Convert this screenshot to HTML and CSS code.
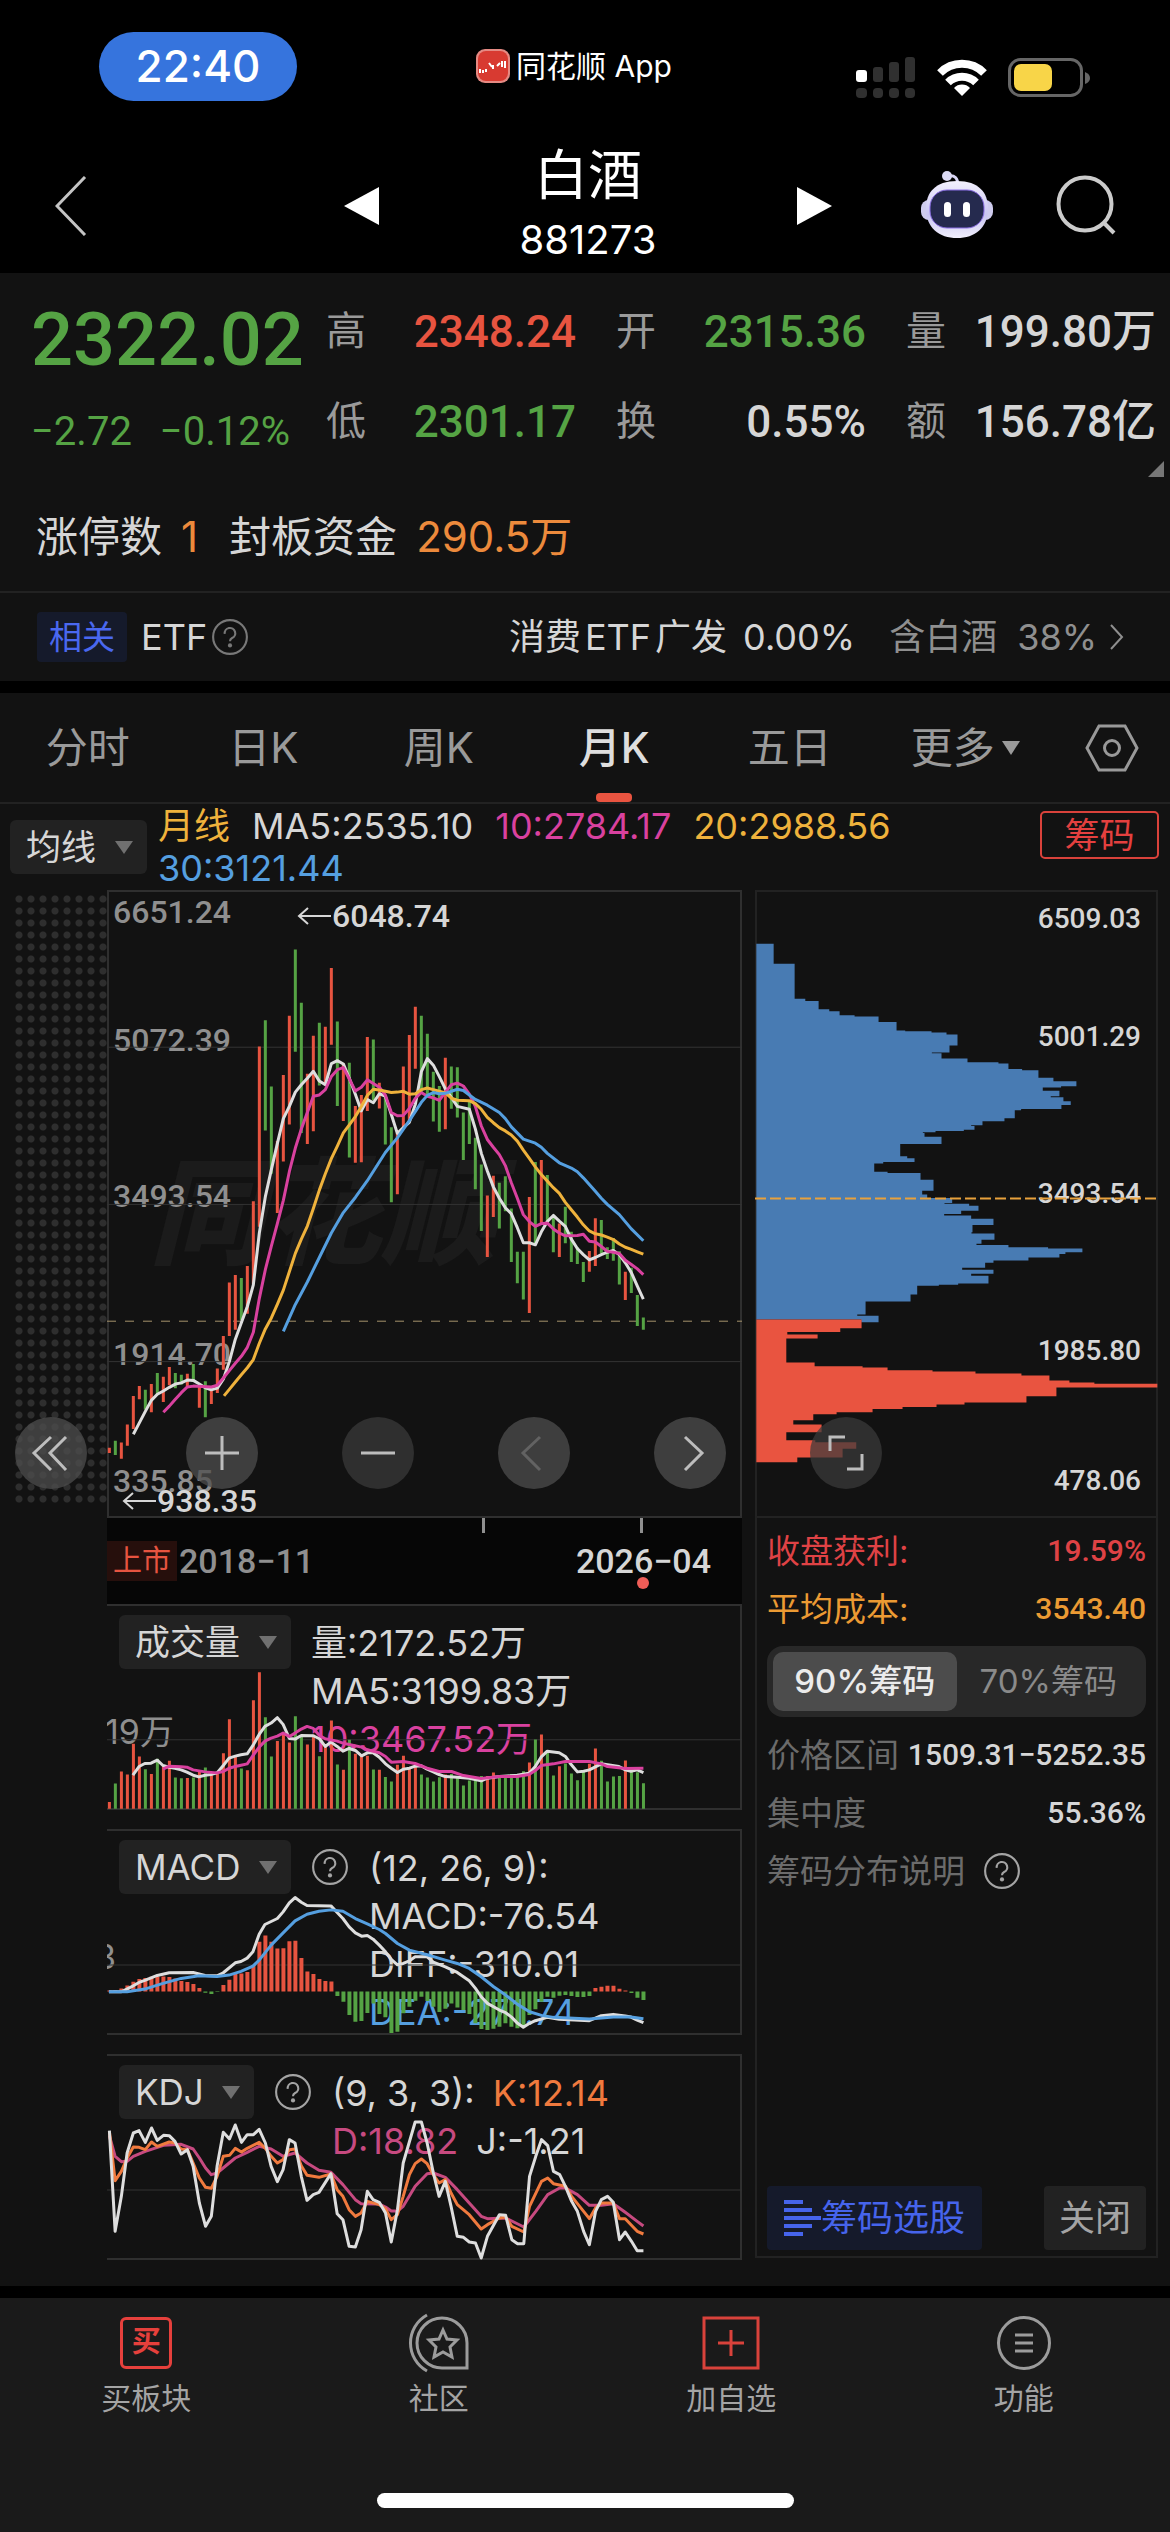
FILE: index.html
```html
<!DOCTYPE html>
<html lang="zh-CN">
<head>
<meta charset="utf-8">
<meta name="viewport" content="width=device-width">
<title>白酒 881273</title>
<link rel="stylesheet" href="styles.css">
</head>
<body>
<header class="top">
  <div class="status">
    <span class="clock">22:40</span>
    <span class="source">
      <svg width="34" height="34" viewBox="0 0 34 34" aria-hidden="true"><rect width="34" height="34" rx="9" fill="#e58a83"/><rect x="2" y="2" width="30" height="30" rx="8" fill="#d83a31"/><path d="M4 20v4M7 21v3M10 20v3M13 14l3 4M17 16v4M21 17l3-3M26 12v6M29 12v7" stroke="#fff" stroke-width="2" fill="none"/></svg>
      同花顺 App
    </span>
    <span class="signals">
      <svg width="60" height="42" viewBox="0 0 60 42" aria-hidden="true"><g fill="#303030"><rect x="17" y="10" width="10" height="15" rx="3"/><rect x="33" y="5" width="10" height="20" rx="3"/><rect x="49" y="0" width="10" height="25" rx="3"/><rect x="0" y="31" width="11" height="10" rx="4"/><rect x="17" y="31" width="10" height="10" rx="4"/><rect x="33" y="31" width="10" height="10" rx="4"/><rect x="49" y="31" width="10" height="10" rx="4"/></g><rect x="0" y="13" width="11" height="12" rx="3" fill="#fff"/></svg>
      <svg width="50" height="38" viewBox="0 0 50 38" aria-hidden="true"><g fill="none" stroke="#fff" stroke-width="8"><path d="M3 14a31 31 0 0 1 44 0"/><path d="M11 23.500a20 20 0 0 1 28 0"/></g><path d="M25 37l-8-8a11 11 0 0 1 16 0z" fill="#fff"/></svg>
      <svg width="82" height="40" viewBox="0 0 82 40" aria-hidden="true"><rect x="1.500" y="1.500" width="72" height="36" rx="11" fill="none" stroke="#666" stroke-width="3"/><rect x="6" y="6" width="38" height="27" rx="7" fill="#f8d548"/><path d="M77 14q5 2 5 6t-5 6z" fill="#666"/></svg>
    </span>
  </div>
  <nav class="title-bar">
    <button class="plain" aria-label="返回"><svg width="32" height="60" viewBox="0 0 32 60"><path d="M30 1L2 30l28 29" fill="none" stroke="#c4c4c4" stroke-width="3"/></svg></button>
    <button class="plain" aria-label="上一个"><svg width="35" height="38" viewBox="0 0 35 38"><path d="M35 0v38L0 19z" fill="#fff"/></svg></button>
    <div class="title"><h1>白酒</h1><p>881273</p></div>
    <button class="plain" aria-label="下一个"><svg width="35" height="38" viewBox="0 0 35 38"><path d="M0 0v38l35-19z" fill="#fff"/></svg></button>
    <button class="plain" aria-label="智能助手">
      <svg width="72" height="68" viewBox="0 0 72 68"><defs><linearGradient id="shell" x1="0" y1="0" x2="0" y2="1"><stop offset="0" stop-color="#f2f0fd"/><stop offset=".6" stop-color="#c9c5f2"/><stop offset="1" stop-color="#f1effc"/></linearGradient></defs><path d="M27 5q10-2 10 10" fill="none" stroke="#d9d6f4" stroke-width="3"/><circle cx="26" cy="5" r="5" fill="#dcdaf4"/><rect x="0" y="29" width="72" height="20" rx="8" fill="#cfccee"/><path d="M36 10c22 0 31 12 31 27 0 20-13 30-31 30S5 57 5 37c0-15 9-27 31-27z" fill="url(#shell)"/><rect x="9" y="19" width="54" height="38" rx="17" fill="#252a4e" stroke="#8c6fe6" stroke-width="1"/><rect x="23" y="31" width="7" height="15" rx="3.500" fill="#fff"/><rect x="42" y="31" width="7" height="15" rx="3.500" fill="#fff"/></svg>
    </button>
    <button class="plain" aria-label="搜索"><svg width="62" height="60" viewBox="0 0 62 60"><circle cx="29" cy="29" r="26.500" fill="none" stroke="#cbcbcb" stroke-width="4"/><path d="M47 47l11 11" stroke="#cbcbcb" stroke-width="4"/></svg></button>
  </nav>
</header>

<main>
  <section class="panel">
    <div class="quote">
      <div class="price down">
        <strong>2322.02</strong>
        <p><span>−2.72</span><span>−0.12%</span></p>
      </div>
      <dl class="stats">
        <div><dt>高</dt><dd class="up">2348.24</dd></div>
        <div><dt>开</dt><dd class="down">2315.36</dd></div>
        <div><dt>量</dt><dd>199.80万</dd></div>
        <div><dt>低</dt><dd class="down">2301.17</dd></div>
        <div><dt>换</dt><dd>0.55%</dd></div>
        <div><dt>额</dt><dd>156.78亿</dd></div>
      </dl>
      <i class="corner"></i>
    </div>
    <p class="limits">涨停数<b>1</b><span>封板资金</span><b>290.5万</b></p>
    <a class="etf" href="#etf">
      <span class="tag">相关</span><span>ETF</span>
      <svg class="help dim" viewBox="0 0 36 36"><circle cx="18" cy="18" r="16"/><path d="M13 15a5 5 0 1 1 7 4q-2 1-2 3"/><circle class="dot" cx="18" cy="26" r="2"/></svg>
      <span class="etf-name">消费<span>ETF</span>广发</span><span>0.00%</span><span class="muted etf-holding">含白酒</span><span class="muted etf-share">38%</span>
      <svg width="15" height="26" viewBox="0 0 15 26"><path d="M2 1l11 12L2 25" fill="none" stroke="#8f8f8f" stroke-width="2"/></svg>
    </a>
  </section>

  <section class="panel chart-panel">
    <div class="tabs">
      <button>分时</button><button>日K</button><button>周K</button><button class="active">月K</button><button>五日</button><button>更多<i class="caret"></i></button>
      <button aria-label="设置" class="gear"><svg width="54" height="48" viewBox="0 0 54 48"><path d="M14 2h26l12 22-12 22H14L2 24z" fill="none" stroke="#999" stroke-width="3"/><circle cx="27" cy="24" r="7.500" fill="none" stroke="#999" stroke-width="3"/></svg></button>
    </div>
    <div class="averages">
      <label class="pick"><select aria-label="主图指标"><option>均线</option></select></label>
      <p><span class="yellow">月线</span><span>MA5:2535.10</span><span class="pink">10:2784.17</span><span class="yellow">20:2988.56</span><span class="blue">30:3121.44</span></p>
      <button class="chips-toggle">筹码</button>
    </div>

    <div class="board">
      <div class="dots"></div>
      <div class="charts">
        <div class="frame price-chart">
          <span class="watermark">同花顺</span>
          <span class="y-label y1">6651.24</span><span class="y-label y2">5072.39</span><span class="y-label y3">3493.54</span><span class="y-label y4">1914.70</span><span class="y-label y5">335.85</span>
          <svg class="plot" viewBox="21 25 1905 1538" preserveAspectRatio="none" aria-label="月K线">
            <path class="grid" d="M21 410H1926M21 795H1926M21 1180H1926"/>
            <path class="last" d="M21 1081H1926"/>
            <path class="candle red" id="candle-up"/><path class="candle green" id="candle-down"/>
            <polyline class="line white" points="100,1358 118,1330 136,1302 154,1275 172,1260 190,1252 208,1243 226,1235 244,1232 262,1225 280,1226 298,1235 316,1244 334,1249 352,1245 370,1223 388,1180 406,1125 424,1085 442,1045 460,992 478,865 496,776 514,710 532,646 550,585 568,555 586,520 604,502 622,486 640,469 658,493 676,502 694,450 712,443 730,451 748,486 766,525 784,566 802,538 820,546 838,524 856,530 874,575 892,621 910,607 928,594 946,550 964,470 982,438 1000,454 1018,482 1036,512 1054,533 1072,555 1108,562 1126,610 1144,670 1162,713 1180,752 1198,780 1216,803 1234,818 1252,852 1270,889 1288,889 1306,894 1324,862 1342,837 1360,822 1378,836 1396,849 1414,880 1432,903 1450,918 1468,931 1486,925 1504,918 1522,912 1540,908 1558,918 1576,938 1594,962 1612,995 1630,1027"/>
            <polyline class="line pink" points="190,1304 208,1289 226,1272 244,1256 262,1242 280,1240 334,1242 352,1238 370,1220 388,1202 406,1184 424,1167 442,1145 460,1108 478,1025 496,955 514,897 532,842 550,785 568,715 586,657 604,610 622,570 640,530 658,527 676,514 694,482 712,465 730,460 748,488 766,517 784,508 802,490 820,499 838,508 856,527 874,570 892,578 910,577 928,560 946,535 964,521 982,530 1000,534 1018,540 1036,520 1054,502 1072,498 1090,505 1108,525 1126,555 1144,603 1162,636 1180,655 1198,673 1216,700 1234,742 1252,780 1270,820 1288,837 1306,849 1324,842 1342,841 1360,855 1378,865 1396,872 1432,871 1450,868 1468,885 1486,887 1504,898 1522,910 1540,912 1558,915 1576,932 1594,942 1612,953 1630,967"/>
            <polyline class="line yellow" points="372,1264 388,1248 406,1230 424,1212 442,1195 460,1175 478,1135 496,1100 514,1073 532,1040 550,1005 568,960 586,915 604,880 622,848 640,805 658,760 676,720 694,683 712,652 730,620 748,600 766,580 784,555 802,528 820,513 838,515 856,518 874,521 892,520 910,518 928,525 946,524 964,514 982,510 1000,514 1018,518 1036,522 1054,535 1072,540 1108,541 1126,548 1144,562 1162,582 1180,595 1198,607 1216,615 1234,625 1252,640 1270,662 1288,682 1306,703 1324,722 1342,738 1360,754 1378,768 1396,790 1414,808 1432,826 1450,845 1468,860 1486,867 1504,870 1522,875 1540,881 1558,892 1576,900 1594,905 1612,911 1630,917"/>
            <polyline class="line blue" points="550,1106 586,1040 622,985 658,925 694,865 730,815 766,778 802,737 856,668 892,632 928,590 964,545 982,528 1000,521 1018,524 1036,523 1072,513 1090,516 1126,538 1162,552 1198,570 1216,585 1234,605 1270,635 1306,645 1324,655 1342,670 1378,693 1414,706 1432,715 1450,730 1486,763 1504,780 1522,795 1558,820 1594,855 1630,884"/>
          </svg>
          <span class="extreme high"><svg width="34" height="18" viewBox="0 0 34 18"><path d="M34 9H2M11 1L2 9l9 8"/></svg>6048.74</span>
          <span class="extreme low"><svg width="34" height="18" viewBox="0 0 34 18"><path d="M34 9H2M11 1L2 9l9 8"/></svg>938.35</span>
        </div>
        <div class="axis">
          <i class="tick t1"></i><i class="tick t2"></i>
          <span class="listed">上市</span><span class="muted">2018−11</span><span class="now">2026−04</span>
        </div>
        <div class="frame sub">
          <div class="sub-head">
            <label class="pick"><select aria-label="副图指标一"><option>成交量</option></select></label>
            <p><span>量:2172.52万</span><br><span>MA5:3199.83万</span><br><span class="pink">10:3467.52万</span></p>
          </div>
          <span class="scale">19万</span>
          <svg class="plot" viewBox="224 312 1327 616" preserveAspectRatio="none" aria-label="成交量">
            <path class="grid" d="M224 718H1551"/>
            <path class="candle red" id="volume-up"/><path class="candle green" id="volume-down"/>
            <polyline class="line white" points="278,824 291,798 303,789 316,788 329,779 341,795 354,800 366,803 379,808 391,815 404,824 416,829 429,824 441,822 454,817 467,795 479,773 492,767 504,763 517,760 529,735 542,702 554,678 567,668 580,652 592,672 605,714 617,716 630,705 655,706 668,715 680,738 692,725 705,738 717,752 730,744 743,750 756,766 768,757 780,757 793,770 806,790 818,803 831,816 843,806 856,803 868,797 881,796 893,806 906,814 918,822 931,828 956,830 981,833 1006,841 1019,833 1044,828 1081,824 1106,818 1119,798 1131,770 1144,752 1169,757 1182,768 1194,792 1207,814 1220,812 1232,808 1257,790 1270,793 1294,798 1307,808 1319,812 1332,808 1345,816"/>
            <polyline class="line pink" points="341,806 354,797 379,799 391,800 404,808 429,814 454,817 467,813 479,803 492,798 504,794 517,790 529,765 542,740 554,722 567,713 580,707 592,698 605,708 617,698 630,686 642,678 655,684 668,705 680,715 705,722 717,728 730,732 756,740 768,748 793,757 806,768 818,785 843,783 868,789 893,803 918,813 944,813 969,825 1006,834 1044,828 1081,828 1106,822 1119,810 1131,795 1157,790 1182,783 1232,783 1257,790 1270,798 1307,804 1345,803"/>
          </svg>
        </div>
        <div class="frame sub">
          <div class="sub-head">
            <label class="pick"><select aria-label="副图指标二"><option>MACD</option></select></label>
            <svg class="help" viewBox="0 0 36 36"><circle cx="18" cy="18" r="16"/><path d="M13 15a5 5 0 1 1 7 4q-2 1-2 3"/><circle class="dot" cx="18" cy="26" r="2"/></svg>
            <p><span>(12, 26, 9):</span><br><span>MACD:-76.54</span><br><span>DIFF:-310.01</span><br><span class="blue">DEA:-271.74</span></p>
          </div>
          <span class="scale clipped">3</span>
          <svg class="plot" viewBox="224 56 1327 619" preserveAspectRatio="none" aria-label="MACD">
            <path class="grid" d="M224 465H1551"/>
            <path class="candle wide red" id="macd-up"/><path class="candle wide green" id="macd-down"/>
            <polyline class="line white" points="228,545 254,545 278,528 291,517 303,511 329,496 354,488 404,487 429,496 454,497 467,488 492,458 504,454 517,444 529,425 542,372 554,343 580,325 592,305 605,278 617,262 630,276 642,286 692,287 705,307 717,325 730,350 743,368 756,378 768,376 780,387 793,405 806,425 818,448 831,464 843,460 856,452 868,440 893,440 906,456 931,470 956,487 981,512 994,535 1006,560 1019,580 1044,600 1057,608 1070,622 1082,640 1094,652 1107,640 1119,632 1144,622 1169,628 1232,632 1257,617 1282,613 1307,618 1319,621 1332,630 1345,638"/>
            <polyline class="line blue" points="228,545 266,545 303,537 341,520 379,505 416,497 454,499 479,495 504,484 529,468 542,450 567,405 592,368 617,332 642,312 667,303 692,299 717,303 743,325 768,341 793,358 806,370 831,400 856,420 893,434 931,450 956,460 981,475 1006,500 1032,530 1057,555 1082,583 1107,605 1132,616 1157,622 1232,627 1282,621 1319,621 1345,626"/>
          </svg>
        </div>
        <div class="frame sub">
          <div class="sub-head">
            <label class="pick"><select aria-label="副图指标三"><option>KDJ</option></select></label>
            <svg class="help" viewBox="0 0 36 36"><circle cx="18" cy="18" r="16"/><path d="M13 15a5 5 0 1 1 7 4q-2 1-2 3"/><circle class="dot" cx="18" cy="26" r="2"/></svg>
            <p><span>(9, 3, 3):</span><span class="orange">K:12.14</span><br><span class="rose">D:18.82</span><span>J:-1.21</span></p>
          </div>
          <svg class="plot" viewBox="224 733 1327 618" preserveAspectRatio="none" aria-label="KDJ">
            <path class="grid" d="M224 1141H1551"/>
            <polyline class="line rose" points="229,978 241,1040 254,1056 266,1055 279,1040 304,1025 342,1007 379,1004 404,1018 417,1045 430,1075 442,1095 454,1090 492,1045 517,1028 542,1010 567,1018 592,1040 617,1030 642,1060 667,1082 692,1088 717,1125 743,1170 755,1182 793,1183 806,1192 818,1204 831,1204 843,1190 868,1130 893,1092 906,1090 931,1103 956,1140 981,1180 1006,1220 1019,1227 1057,1225 1095,1252 1120,1205 1145,1155 1170,1135 1182,1135 1207,1155 1232,1187 1257,1187 1282,1182 1307,1208 1332,1235 1345,1249"/>
            <polyline class="line orange" points="229,965 241,1113 254,1085 266,1045 279,1012 291,1013 304,1020 317,997 329,1010 354,997 366,1000 379,1018 392,1020 404,1060 417,1105 430,1133 442,1136 454,1100 467,1040 480,1037 492,1016 505,1027 517,1016 542,998 555,1016 567,1040 580,1060 592,1050 605,1020 617,1018 630,1068 642,1097 667,1103 692,1093 705,1140 717,1160 730,1200 743,1220 755,1210 768,1175 793,1185 806,1197 818,1230 831,1215 843,1160 856,1095 868,1062 881,1048 893,1062 906,1095 918,1120 931,1110 943,1150 956,1185 981,1215 1006,1258 1019,1245 1044,1225 1057,1222 1070,1250 1095,1267 1107,1190 1132,1115 1145,1105 1157,1122 1182,1130 1195,1160 1220,1205 1232,1227 1245,1195 1257,1180 1282,1180 1295,1227 1307,1227 1332,1265 1345,1273"/>
            <polyline class="line white" points="229,963 241,1265 254,1160 266,1030 279,970 291,963 304,998 317,955 329,992 342,977 354,978 366,995 379,1033 392,1020 404,1070 417,1180 430,1250 442,1220 454,1070 467,968 480,988 492,946 505,998 517,975 530,975 542,959 555,1000 567,1070 580,1116 592,1080 605,990 617,1000 630,1100 642,1172 655,1155 667,1148 692,1092 705,1212 717,1230 730,1310 743,1312 755,1260 768,1145 780,1170 793,1178 806,1210 818,1297 831,1200 843,1060 868,937 881,937 893,1000 906,1090 918,1160 931,1115 943,1190 956,1280 969,1283 981,1297 994,1300 1006,1345 1019,1280 1044,1215 1057,1217 1070,1290 1082,1302 1095,1302 1107,1100 1120,1040 1132,990 1145,1008 1157,1085 1170,1095 1182,1130 1195,1175 1207,1205 1220,1265 1232,1305 1245,1205 1257,1170 1270,1160 1282,1178 1295,1290 1307,1267 1320,1295 1332,1323 1345,1323"/>
          </svg>
        </div>
      </div>

      <aside class="chips">
        <div class="chip-chart">
          <svg class="plot" viewBox="15 25 1210 1538" preserveAspectRatio="none" aria-label="筹码分布">
            <path fill="#487bb3" d="M19 157H71V206H134V292H166V298H206V318H238V323H269V333H314V336H386V349H440V370H466V372H545V375H590V380H623V407H599V424H546V426H575V439H653V448H746V451H776V465H817V468H866V486H911V495H980V507H934V510H879V518H929V532H903V534H941V544H963V553H935V563H814V566H795V586H764V593H698V603H664V605H674V614H642V617H557V620H519V622H524V631H575V649H451V679H472V684H494V693H400V697H373V717H413V720H512V737H551V764H517V773H532V782H607V794H584V796H658V801H686V813H634V821H583V825H664V833H731V848H668V866H665V869H734V884H695V894H680V897H776V903H895V906H998V915H947V919H929V928H836V935H731V941H706V953H637V958H731V968H664V973H716V992H625V995H567V997H502V1019H482V1036H347V1068H322V1071H386V1087H334V1080H19Z"/>
            <path fill="#e95440" d="M19 1080H335V1102H271V1111H112V1117H203V1127H109V1186H194V1195H338V1198H413V1205H548V1208H677V1213H815V1218H899V1230H959V1235H1034V1238H1223V1247H920V1269H830V1284H644V1289H560V1295H458V1300H368V1308H260V1313H190V1328H130V1338H215V1357H109V1377H196V1382H319V1398H278V1419H142V1431H19Z"/>
          </svg>
          <span class="c-label c1">6509.03</span><span class="c-label c2">5001.29</span><span class="c-label c3">3493.54</span><span class="c-label c4">1985.80</span><span class="c-label c5">478.06</span>
          <svg class="plot" viewBox="15 25 1210 1538" preserveAspectRatio="none" aria-hidden="true"><path class="mean" d="M15 783H1225"/></svg>
        </div>
        <dl class="rows">
          <div class="profit"><dt>收盘获利:</dt><dd>19.59%</dd></div>
          <div class="cost"><dt>平均成本:</dt><dd>3543.40</dd></div>
        </dl>
        <div class="segment">
          <label><input type="radio" name="range" checked><span>90%筹码</span></label>
          <label><input type="radio" name="range"><span>70%筹码</span></label>
        </div>
        <dl class="rows">
          <div><dt>价格区间</dt><dd>1509.31−5252.35</dd></div>
          <div><dt>集中度</dt><dd>55.36%</dd></div>
        </dl>
        <a class="explain" href="#chips">筹码分布说明<svg class="help" viewBox="0 0 36 36"><circle cx="18" cy="18" r="16"/><path d="M13 15a5 5 0 1 1 7 4q-2 1-2 3"/><circle class="dot" cx="18" cy="26" r="2"/></svg></a>
        <div class="chip-actions">
          <button class="pick-stocks"><svg width="37" height="36" viewBox="0 0 37 36"><path d="M0 2h19M0 10h28M0 18h37M0 26h28M0 34h19" stroke="#4664ec" stroke-width="4"/></svg>筹码选股</button>
          <button class="close">关闭</button>
        </div>
      </aside>

      <div class="tools">
        <button aria-label="展开"><svg viewBox="0 0 72 72"><path d="M36 20L19 36l17 17M51 20L35 36l16 17"/></svg></button>
        <button aria-label="放大"><svg viewBox="0 0 72 72"><path d="M36 19v34M19 36h34"/></svg></button>
        <button class="faint" aria-label="缩小"><svg viewBox="0 0 72 72"><path d="M19 36h34"/></svg></button>
        <button class="off" aria-label="向左" disabled><svg viewBox="0 0 72 72"><path d="M42 20L25 36l17 17"/></svg></button>
        <button aria-label="向右"><svg viewBox="0 0 72 72"><path d="M31 20l17 16-17 17"/></svg></button>
        <button class="faint" aria-label="全屏"><svg viewBox="0 0 72 72"><path d="M20 34V20h15M52 37v15H37"/></svg></button>
      </div>
    </div>
  </section>
</main>

<footer class="bottom">
  <nav>
    <a href="#buy"><span class="buy-icon">买</span>买板块</a>
    <a href="#community"><svg width="62" height="60" viewBox="0 0 62 60"><g fill="none" stroke="#9c9c9c" stroke-width="3"><path d="M19 2a32 32 0 0 0 0 56"/><path d="M59 30a25 25 0 1 0-25 25h25z"/><path d="M35 17l4 9 10 1-7 7 2 10-9-5-9 5 2-10-7-7 10-1z"/></g></svg>社区</a>
    <a href="#watch"><svg width="58" height="60" viewBox="0 0 58 60"><path d="M2 5h54v50H2zM29 17v26M16 30h26" fill="none" stroke="#d9423b" stroke-width="3"/></svg>加自选</a>
    <a href="#more"><svg width="56" height="60" viewBox="0 0 56 60"><circle cx="28" cy="30" r="25.500" fill="none" stroke="#9c9c9c" stroke-width="3"/><path d="M19 22h18M19 30h18M19 38h18" stroke="#9c9c9c" stroke-width="3"/></svg>功能</a>
  </nav>
  <i class="home"></i>
</footer>
<script src="script.js"></script>
</body>
</html>
```
FILE: styles.css
```css
* { box-sizing: border-box; margin: 0; padding: 0; }
body { background: #000; color: #d6d6d6; font: 400 34px/48px Inter, "Noto Sans CJK SC", sans-serif; }
button, select { font: inherit; color: inherit; background: none; border: 0; }
a { color: inherit; text-decoration: none; }
svg { display: block; flex: none; }
i { display: block; }
main { display: flex; flex-direction: column; gap: 12px; }

.up, .red { color: #e75440; }
.down, .green { color: #55a344; }
.muted { color: #8f8f8f; }
.white { color: #dedede; }
.pink { color: #d9419f; }
.yellow { color: #efb23c; }
.blue { color: #559fe0; }
.orange { color: #f07a3e; }
.rose { color: #c74a80; }

/* status bar and title */
.status { display: grid; grid-template-columns: 377px auto 1fr; align-items: start; height: 132px; padding: 32px 80px 0 99px; color: #fff; }
.clock { justify-self: start; width: 198px; border-radius: 35px; background: #3674dd; text-align: center; font-size: 44px; font-weight: 500; line-height: 69px; }
.source { display: flex; align-items: center; gap: 6px; padding-top: 10px; font-size: 30px; line-height: 48px; }
.signals { justify-self: end; display: flex; align-items: center; gap: 21px; padding-top: 25px; }
.title-bar { display: grid; grid-template-columns: 289px 35px 1fr 35px 89px 72px 63px 62px; align-items: center; height: 141px; padding: 0 52px 0 55px; color: #fff; }
.title-bar .plain:nth-child(5) { grid-column: 6; padding-bottom: 2px; }
.title-bar .plain:nth-child(6) { grid-column: 8; padding-top: 4px; }
.plain { display: flex; padding-top: 6px; }
.title { padding-top: 8px; text-align: center; }
.title h1 { font-size: 54px; font-weight: 400; line-height: 66px; }
.title p { font-size: 40px; line-height: 62px; }

/* quote summary */
.panel { background: #121212; }
.quote { position: relative; display: flex; padding: 14px 14px 0 31px; font-family: Roboto, "Noto Sans CJK SC", sans-serif; font-weight: 500; }
.price { width: 295px; padding-top: 6px; white-space: nowrap; }
.price strong { display: block; font-size: 74px; font-weight: 500; line-height: 94px; }
.price p { display: flex; gap: 28px; font-size: 40px; font-weight: 400; line-height: 90px; }
.stats { flex: 1; display: grid; grid-template-columns: repeat(3, 1fr); align-content: start; column-gap: 40px; white-space: nowrap; }
.stats div { display: flex; justify-content: space-between; font-size: 44px; line-height: 90px; }
.stats dt { font-size: 40px; font-weight: 400; color: #9a9a9a; }
.corner { position: absolute; right: 6px; bottom: 0; border: 8px solid; border-color: transparent #777 #777 transparent; }
.limits { display: flex; gap: 19px; padding: 6px 36px 0; border-bottom: 2px solid #222; font-size: 42px; line-height: 108px; }
.limits b { font-weight: 400; color: #ec8a3c; }
.limits span { padding-left: 12px; }
.etf { display: flex; align-items: center; height: 88px; padding: 0 46px 0 37px; font-size: 36px; }
.tag { margin-right: 14px; padding: 0 12px; border-radius: 4px; background: #151a2b; color: #4a68f0; font-size: 33px; line-height: 50px; }
.help { width: 38px; height: 38px; fill: none; stroke: #a4a4a4; stroke-width: 2; }
.help .dot { fill: #a4a4a4; stroke: none; }
.help.dim { margin-left: 4px; opacity: .7; }
.etf-name { margin: 0 16px 0 auto; }
.etf-name span { margin: 0 4px; }
.etf-holding { margin: 0 20px 0 34px; }
.etf-share { margin-right: 12px; }

/* period tabs */
.tabs { display: grid; grid-template-columns: repeat(6, 3fr) 2fr; height: 111px; border-bottom: 2px solid #222; color: #9a9a9a; font-size: 42px; }
.tabs button { position: relative; display: flex; align-items: center; justify-content: center; }
.tabs .active { color: #dedede; font-weight: 500; }
.tabs .active::after { content: ""; position: absolute; bottom: 0; width: 36px; height: 9px; border-radius: 4px; background: #e95440; }
.caret { margin-left: 7px; border: 9px solid transparent; border-top: 14px solid #9a9a9a; border-bottom: 0; }
.averages { display: flex; align-items: center; height: 86px; padding: 0 11px 0 10px; font-size: 36px; line-height: 42px; }
.averages p { flex: 1; display: flex; flex-wrap: wrap; column-gap: 22px; padding: 0 130px 0 11px; }
.chips-toggle { width: 119px; margin-bottom: 24px; border: 2px solid #d9423b; border-radius: 5px; color: #e4403f; font-size: 35px; line-height: 44px; }
.pick { position: relative; display: block; flex: none; border-radius: 6px; background: #222; }
.pick select { display: block; height: 54px; padding: 0 50px 0 16px; appearance: none; font-size: 35px; line-height: 54px; }
.pick::after { content: ""; position: absolute; right: 14px; top: 21px; border: 9px solid transparent; border-top: 13px solid #707070; border-bottom: 0; pointer-events: none; }

/* chart board */
.board { position: relative; display: grid; grid-template-columns: 92px 635fr 416fr; padding: 0 12px 26px 15px; }
.dots { height: 612px; margin-top: 3px; background: radial-gradient(circle, #2e2e2e 3px, transparent 4px) -2px 0 / 12px 12px; }
.charts { display: flex; flex-direction: column; gap: 19px; min-width: 0; }
.frame { position: relative; box-shadow: inset 0 2px #2f2f2f, inset 0 -2px #2f2f2f, inset -2px 0 #2f2f2f; }
.price-chart { height: 628px; box-shadow: inset 0 0 0 2px #2f2f2f; font-family: Roboto, sans-serif; }
.plot { position: absolute; inset: 0; width: 100%; height: 100%; pointer-events: none; }
.plot path, .plot polyline { vector-effect: non-scaling-stroke; }
.grid { fill: none; stroke: #333; stroke-width: 1; }
.last { stroke: #a5936c; stroke-width: 1; stroke-dasharray: 9 9; }
.candle { fill: none; stroke: currentColor; stroke-width: 3; }
.candle.wide { stroke-width: 4; }
.line { fill: none; stroke: currentColor; stroke-width: 3; stroke-linejoin: round; }
.watermark { position: absolute; left: 42px; top: 250px; color: #1b1b1b; font: italic 900 116px/128px "Noto Sans CJK SC", sans-serif; }
.y-label { position: absolute; left: 6px; color: #8f8f8f; font-size: 32px; font-weight: 500; line-height: 36px; }
.y1 { top: 4px; }
.y2 { top: 132px; }
.y3 { top: 288px; }
.y4 { top: 446px; }
.y5 { top: 573px; }
.extreme { position: absolute; display: flex; align-items: center; gap: 1px; font-size: 32px; font-weight: 500; line-height: 36px; }
.extreme path { fill: none; stroke: #d6d6d6; stroke-width: 2; }
.high { left: 190px; top: 8px; }
.low { left: 15px; top: 593px; }
.axis { position: relative; display: flex; align-items: center; height: 86px; margin: -19px 0; background: #060606; font: 500 34px/40px Roboto, "Noto Sans CJK SC", sans-serif; }
.listed { margin-right: 2px; padding: 0 6px; background: #260f0c; color: #e75440; font-size: 29px; font-weight: 400; }
.now { position: absolute; right: 31px; }
.now::after { content: ""; position: absolute; left: 50%; bottom: -8px; width: 12px; height: 12px; margin-left: -6px; border-radius: 6px; background: #ef5d57; }
.tick { position: absolute; top: 0; width: 3px; height: 15px; background: #8f8f8f; }
.t1 { left: 59%; }
.t2 { left: 84%; }
.sub { height: 206px; overflow: hidden; }
.sub-head { display: flex; align-items: flex-start; gap: 14px; padding: 11px 0 0 12px; white-space: nowrap; }
.sub-head .help { margin: 8px 0 0 6px; }
.sub-head p { padding: 4px 0 0 6px; font-size: 36px; }
.sub-head p span { margin-right: 18px; }
.scale { position: absolute; left: -2px; top: 104px; color: #8f8f8f; }
.clipped { left: -12px; }

/* chip distribution */
.chips { display: flex; flex-direction: column; height: 1368px; margin-left: 13px; padding: 0 10px 6px; border: 2px solid #222; }
.chip-chart { position: relative; height: 628px; margin: -2px -12px 10px; border-bottom: 2px solid #222; }
.mean { stroke: #e8a13c; stroke-width: 2; stroke-dasharray: 11 4; }
.c-label { position: absolute; right: 17px; font: 500 28px/32px Roboto, sans-serif; }
.c1 { top: 13px; }
.c2 { top: 131px; }
.c3 { top: 288px; }
.c4 { top: 445px; }
.c5 { top: 575px; }
.rows div { display: flex; justify-content: space-between; line-height: 58px; font-size: 33px; white-space: nowrap; }
.rows:first-of-type { margin-top: -6px; }
.rows dt, .explain { color: #6b6b6b; }
.rows dd { font-family: Roboto, sans-serif; font-size: 30px; font-weight: 500; }
.rows .profit, .profit dt { color: #df4245; }
.rows .cost, .cost dt { color: #eb9a33; }
.segment { display: flex; height: 71px; margin: 8px 0 9px; padding: 6px; border-radius: 16px; background: #282828; color: #8a8a8a; text-align: center; line-height: 59px; font-size: 33px; }
.segment label { flex: 1; border-radius: 10px; }
.segment label:has(:checked) { background: #4c4c4c; color: #ebebeb; font-weight: 500; }
.segment input { position: absolute; appearance: none; }
.explain { display: flex; align-items: center; gap: 18px; font-size: 33px; line-height: 58px; }
.chip-actions { display: flex; justify-content: space-between; margin-top: auto; font-size: 36px; line-height: 64px; }
.pick-stocks { display: flex; align-items: center; padding: 0 17px; border-radius: 4px; background: #151a2b; color: #4664ec; }
.close { width: 102px; border-radius: 4px; background: #222; color: #a4a4a4; }

.tools { position: absolute; left: 15px; top: 527px; display: flex; gap: 84px; }
.tools button { width: 72px; height: 72px; border-radius: 36px; background: rgba(78, 78, 78, .75); }
.tools button:first-child { margin-right: 15px; }
.tools .faint { background: rgba(58, 58, 58, .72); }
.tools path { fill: none; stroke: #bdbdbd; stroke-width: 3; }
.tools .off path { stroke: #626262; }

/* bottom navigation */
.bottom { margin-top: 12px; padding-bottom: 24px; background: #1a1a1a; }
.bottom nav { display: grid; grid-template-columns: repeat(4, 1fr); height: 195px; padding-top: 15px; color: #a4a4a4; font-size: 30px; line-height: 48px; }
.bottom a { display: flex; flex-direction: column; align-items: center; gap: 1px; }
.buy-icon { width: 52px; height: 52px; margin: 4px 0; border: 3px solid #e6403c; border-radius: 6px; color: #e6403c; text-align: center; font-size: 29px; font-weight: 700; line-height: 44px; }
.home { width: 417px; height: 15px; margin: 0 auto; border-radius: 8px; background: #fff; }
```
FILE: script.js
```js
// Each candle: high and low in plot units, then r (up) or g (down).
const candles = `1391 1404r,1374 1409g,1378 1418r,1334 1386r,1264 1345r,1240 1272r,1249 1297g,1235 1304r,1208 1262g,1217 1279r,1193 1238r,1208 1245g,1212 1236g,1210 1240r,1186 1230g,1238 1293r,1228 1316g,1248 1284r,1197 1257r,1117 1200r,986 1117r,968 1102r,975 1078g,946 1063r,787 990r,408 850r,344 614g,506 720g,640 816r,478 690r,333 599r,171 421g,301 620g,475 647r,382 616r,350 504g,360 500r,216 404r,347 554g,450 591r,448 680g,554 693r,527 692r,385 566r,391 540g,497 560r,530 648g,606 790g,620 770r,457 606r,380 590r,311 463r,333 520g,377 525g,470 592g,505 617g,436 611r,457 561g,459 582g,570 686g,540 647g,632 758g,697 860g,773 924r,725 826r,742 854g,726 812g,805 936g,911 988g,911 1028g,777 1061r,691 890g,686 842r,723 842g,825 912g,842 924r,801 890g,862 936g,900 941g,936 985g,909 960r,829 946r,833 915g,900 929g,877 933g,910 991g,960 1029r,950 1012g,1017 1093g,1072 1102g`;

// Bar tops; the base line is shared.
const volumes = `904r,849g,813r,822r,730r,768r,806g,820r,775g,798r,781r,831g,833g,832r,831g,810r,801g,822r,815r,758r,657r,768r,804g,809r,600r,516r,651g,768g,722r,700r,726r,648g,705g,732r,703r,767g,735r,660r,792g,808r,718g,760r,767r,766r,807g,808r,829g,843g,793r,766r,805r,793r,822g,831g,843g,830g,822r,820g,832g,855g,840g,833g,826g,826r,816r,830g,825g,820g,822g,812g,786r,717g,702r,757g,825g,797r,789g,819g,839g,810g,790r,744r,781g,843g,828g,826g,780r,800g,815g,848g`;
const macd = `541r,540r,535r,526r,515r,507r,504r,500r,500r,499r,501r,505r,513r,516r,522r,534r,548g,552g,546g,525r,509r,492r,490r,486r,465r,395r,376r,395r,415r,414r,393r,392r,444r,484r,492r,507r,513r,514r,558g,575g,615g,635g,633g,609g,580g,612g,622g,669g,665g,610g,590g,572g,560g,573g,590g,606g,596g,580g,592g,600g,612g,640g,657g,660g,656g,650g,640g,650g,655g,650g,615g,598g,575g,560g,563g,557g,555g,558g,561g,561g,558g,534r,530r,527r,527r,536r,541r,549g,563g,570g`;

function draw(name, data, start, step, base) {
  const paths = { r: "", g: "" };
  data.split(",").forEach((item, i) => {
    const [top, bottom] = item.slice(0, -1).split(" ");
    const x = (start + i * step).toFixed(1);
    paths[item.slice(-1)] += `M${x} ${top}V${bottom || base}`;
  });
  document.getElementById(name + "-up").setAttribute("d", paths.r);
  document.getElementById(name + "-down").setAttribute("d", paths.g);
}

draw("candle", candles, 28, 18, 0);
draw("volume", volumes, 229, 12.54, 924);
draw("macd", macd, 229, 12.54, 544);
```
